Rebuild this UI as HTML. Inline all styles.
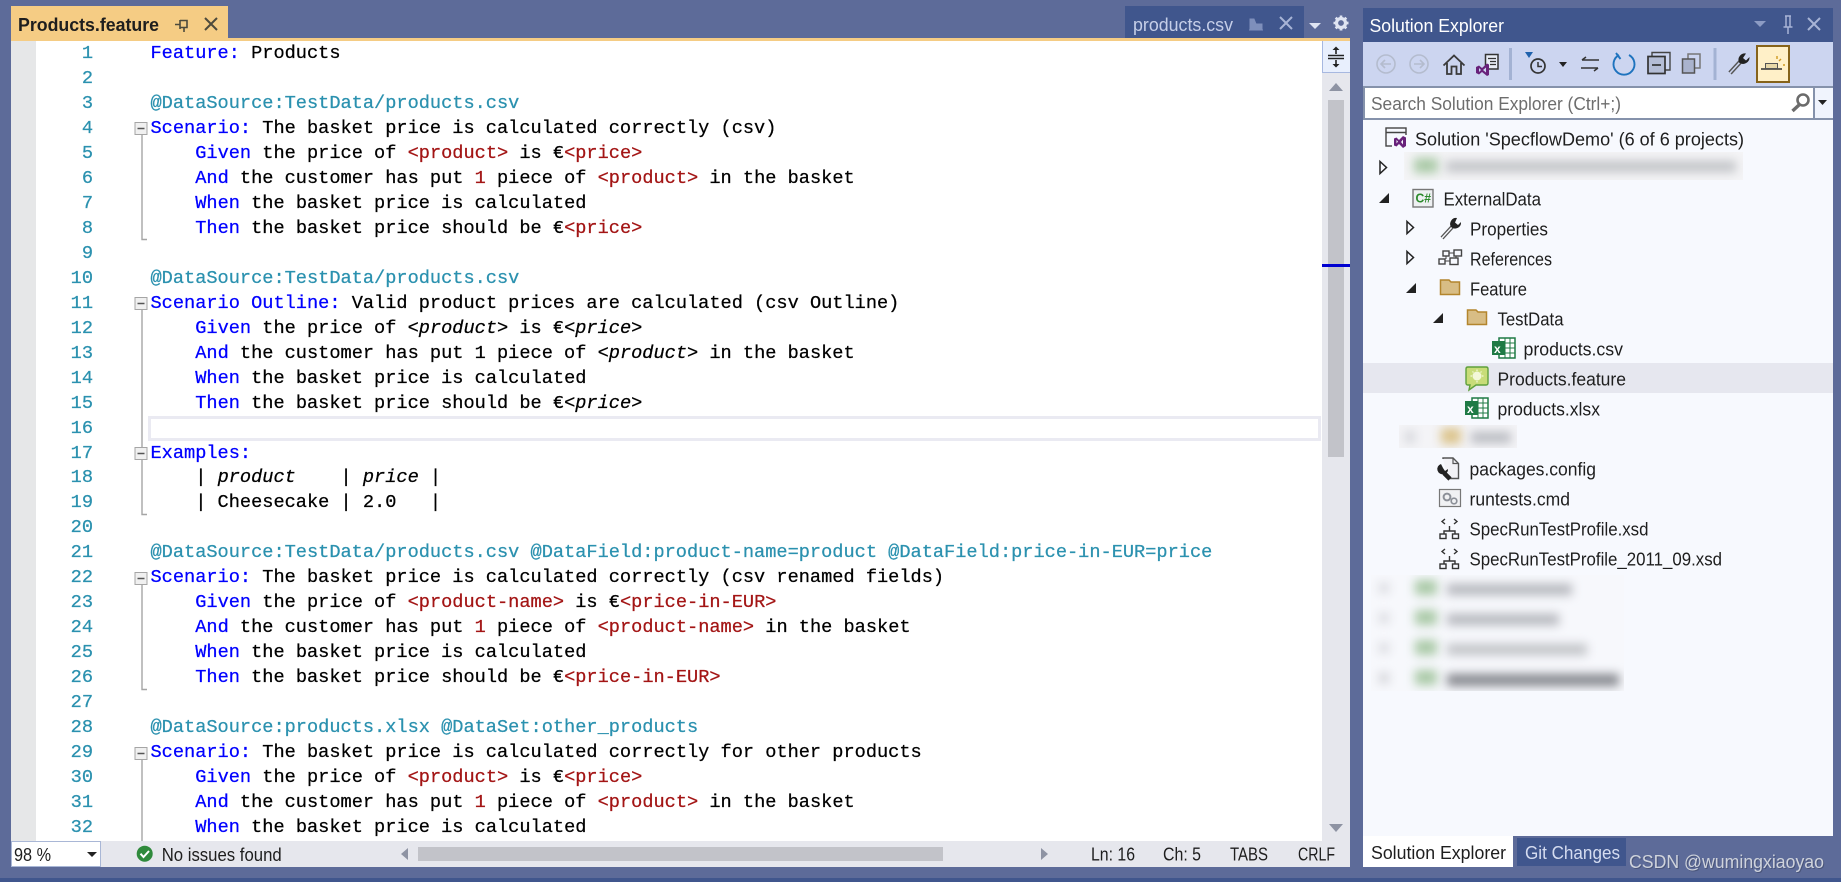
<!DOCTYPE html>
<html lang="en">
<head>
<meta charset="utf-8">
<title>Products.feature</title>
<style>
html,body{margin:0;padding:0;width:1841px;height:882px;overflow:hidden;background:#5d6b99;}
.r{position:absolute;}
#code,#nums{position:absolute;top:0;margin:0;font:18.64px/24.97px "Liberation Mono",monospace;white-space:pre;color:#000;-webkit-text-stroke:.25px currentColor;}
#code{left:139.5px;}
#nums{left:0;width:82px;text-align:right;color:#2b91af;}
.k{color:#0000ff}.t{color:#2b91af}.v{color:#a31515}.i{font-style:italic}
svg{position:absolute;left:0;top:0;}
text{font-family:"Liberation Sans",sans-serif;font-size:18.5px;fill:#1e1e1e;}
.blur{position:absolute;filter:blur(5px);}
</style>
</head>
<body>
<div class="r" style="left:0;top:878px;width:1841px;height:4px;background:#40568d"></div>
<div class="r" style="left:11px;top:6px;width:217px;height:32px;background:#f5cc84"></div>
<div class="r" style="left:1125px;top:6px;width:179px;height:32px;background:#40568d"></div>
<div class="r" style="left:11px;top:38px;width:1339px;height:3px;background:#f5cc84"></div>

<div class="r" style="left:11px;top:41px;width:1311px;height:800px;background:#fff;overflow:hidden">
  <div class="r" style="left:0;top:0;width:25px;height:800px;background:#e6e7e8"></div>
  <div class="r" style="left:137px;top:375px;width:1173px;height:25px;box-sizing:border-box;border:3px solid #eaeaf2"></div>
  <pre id="nums">1
2
3
4
5
6
7
8
9
10
11
12
13
14
15
16
17
18
19
20
21
22
23
24
25
26
27
28
29
30
31
32</pre>
<pre id="code"><span class="k">Feature:</span> Products

<span class="t">@DataSource:TestData/products.csv</span>
<span class="k">Scenario:</span> The basket price is calculated correctly (csv)
    <span class="k">Given</span> the price of <span class="v">&lt;product&gt;</span> is €<span class="v">&lt;price&gt;</span>
    <span class="k">And</span> the customer has put <span class="v">1</span> piece of <span class="v">&lt;product&gt;</span> in the basket
    <span class="k">When</span> the basket price is calculated
    <span class="k">Then</span> the basket price should be €<span class="v">&lt;price&gt;</span>

<span class="t">@DataSource:TestData/products.csv</span>
<span class="k">Scenario Outline:</span> Valid product prices are calculated (csv Outline)
    <span class="k">Given</span> the price of <span class="i">&lt;product&gt;</span> is €<span class="i">&lt;price&gt;</span>
    <span class="k">And</span> the customer has put 1 piece of <span class="i">&lt;product&gt;</span> in the basket
    <span class="k">When</span> the basket price is calculated
    <span class="k">Then</span> the basket price should be €<span class="i">&lt;price&gt;</span>

<span class="k">Examples:</span>
    | <span class="i">product</span>    | <span class="i">price</span> |
    | Cheesecake | 2.0   |

<span class="t">@DataSource:TestData/products.csv @DataField:product-name=product @DataField:price-in-EUR=price</span>
<span class="k">Scenario:</span> The basket price is calculated correctly (csv renamed fields)
    <span class="k">Given</span> the price of <span class="v">&lt;product-name&gt;</span> is €<span class="v">&lt;price-in-EUR&gt;</span>
    <span class="k">And</span> the customer has put <span class="v">1</span> piece of <span class="v">&lt;product-name&gt;</span> in the basket
    <span class="k">When</span> the basket price is calculated
    <span class="k">Then</span> the basket price should be €<span class="v">&lt;price-in-EUR&gt;</span>

<span class="t">@DataSource:products.xlsx @DataSet:other_products</span>
<span class="k">Scenario:</span> The basket price is calculated correctly for other products
    <span class="k">Given</span> the price of <span class="v">&lt;product&gt;</span> is €<span class="v">&lt;price&gt;</span>
    <span class="k">And</span> the customer has put <span class="v">1</span> piece of <span class="v">&lt;product&gt;</span> in the basket
    <span class="k">When</span> the basket price is calculated</pre>
</div>

<!-- editor scrollbar -->
<div class="r" style="left:1322px;top:41px;width:28px;height:800px;background:#e6e7ed"></div>
<div class="r" style="left:1322px;top:41px;width:28px;height:32px;box-sizing:border-box;background:#e8effd;border-left:1px solid #a7b8e0;border-bottom:1px solid #a7b8e0"></div>
<div class="r" style="left:1328px;top:100px;width:16px;height:357px;background:#c2c3c9"></div>
<div class="r" style="left:1322px;top:264px;width:28px;height:3px;background:#0000d0"></div>

<!-- status bar -->
<div class="r" style="left:11px;top:841px;width:1339px;height:26px;background:#e6e7ed"></div>
<div class="r" style="left:11px;top:841px;width:90px;height:26px;box-sizing:border-box;background:#fff;border:1px solid #a9b7d6"></div>
<div class="r" style="left:418px;top:847px;width:525px;height:14px;background:#c2c3c9"></div>

<!-- solution explorer -->
<div class="r" style="left:1363px;top:8px;width:470px;height:34px;background:#40568d"></div>
<div class="r" style="left:1363px;top:42px;width:470px;height:44px;background:#ccd5f0"></div>
<div class="r" style="left:1363px;top:86px;width:470px;height:34px;background:#8592ab"></div>
<div class="r" style="left:1365px;top:88px;width:448px;height:30px;background:#fff"></div>
<div class="r" style="left:1815px;top:88px;width:18px;height:30px;background:#f0f4fd"></div>
<div class="r" style="left:1363px;top:120px;width:470px;height:716px;background:#f7f9fe"></div>
<div class="r" style="left:1363px;top:363px;width:470px;height:30px;background:#e6e7ef"></div>
<div class="r" style="left:1363px;top:836px;width:150px;height:31px;background:#fff"></div>
<div class="r" style="left:1517px;top:838px;width:109px;height:28px;background:#40568d"></div>

<!-- blurred rows -->
<div class="r" style="left:1404px;top:152px;width:339px;height:28px;background:#f4f4f6;overflow:hidden">
  <div class="blur" style="left:10px;top:6px;width:24px;height:15px;background:#a9c9a6"></div>
  <div class="blur" style="left:42px;top:9px;width:290px;height:11px;background:#c0c2c6"></div>
</div>
<div class="r" style="left:1399px;top:425px;width:118px;height:23px;background:#f4f4f7;overflow:hidden">
  <div class="blur" style="left:6px;top:6px;width:10px;height:12px;background:#d4d5da"></div>
  <div class="blur" style="left:42px;top:3px;width:20px;height:16px;background:#dcc48c"></div>
  <div class="blur" style="left:72px;top:7px;width:40px;height:11px;background:#b8bac0"></div>
</div>
<div class="r" style="left:1371px;top:575px;width:253px;height:116px;background:#f7f8fc;overflow:hidden">
  <div class="blur" style="left:8px;top:8px;width:10px;height:10px;background:#d8d9de"></div>
  <div class="blur" style="left:8px;top:38px;width:10px;height:10px;background:#d8d9de"></div>
  <div class="blur" style="left:8px;top:68px;width:10px;height:10px;background:#d8d9de"></div>
  <div class="blur" style="left:8px;top:98px;width:10px;height:10px;background:#d0d1d6"></div>
  <div class="blur" style="left:44px;top:5px;width:22px;height:15px;background:#a9c9a6"></div>
  <div class="blur" style="left:44px;top:35px;width:22px;height:15px;background:#a9c9a6"></div>
  <div class="blur" style="left:44px;top:65px;width:22px;height:15px;background:#a9c9a6"></div>
  <div class="blur" style="left:44px;top:95px;width:22px;height:15px;background:#a9c9a6"></div>
  <div class="blur" style="left:76px;top:9px;width:125px;height:11px;background:#b4b6bc"></div>
  <div class="blur" style="left:76px;top:39px;width:112px;height:11px;background:#b4b6bc"></div>
  <div class="blur" style="left:76px;top:69px;width:140px;height:11px;background:#c0c2c6"></div>
  <div class="blur" style="left:76px;top:99px;width:172px;height:12px;background:#84868c"></div>
</div>

<svg width="1841" height="882" viewBox="0 0 1841 882">
  <!-- top tab -->
  <text x="18" y="31" textLength="141" lengthAdjust="spacingAndGlyphs" style="font-weight:bold">Products.feature</text>
  <g stroke="#4d4a3c" fill="none" stroke-width="1.6">
    <path d="M175 24.5H180M180 20V29M180 20.5H187V27.5H180M184 27.5V32"/>
    <path d="M205 18L217 30M217 18L205 30" stroke-width="2"/>
  </g>
  <!-- products.csv tab -->
  <text x="1133" y="31" textLength="100" lengthAdjust="spacingAndGlyphs" style="fill:#c5cee8">products.csv</text>
  <path d="M1250 19L1254 19L1256 24H1262V29H1250Z M1249 30H1263" fill="#7e8fbb" stroke="#7e8fbb"/>
  <path d="M1280 17L1292 29M1292 17L1280 29" stroke="#a8b4d6" stroke-width="2" fill="none"/>
  <path d="M1309 23H1321L1315 29Z" fill="#dfe4f2"/>
  <circle cx="1341" cy="23" r="4.5" fill="none" stroke="#dfe4f2" stroke-width="3.2"/>
  <path d="M1341 15.5V30.5M1333.5 23H1348.5M1335.7 17.7L1346.3 28.3M1346.3 17.7L1335.7 28.3" stroke="#dfe4f2" stroke-width="2.6" stroke-dasharray="2.6 10"/>
  <path d="M1341 30.5V28M1348.5 23H1346M1346.3 28.3L1344.5 26.5M1335.7 28.3L1337.5 26.5" stroke="#dfe4f2" stroke-width="2.6"/>

  <!-- editor outlining -->
  <g fill="none" stroke="#a5a5a5" stroke-width="1.4">
    <path d="M142 135V239.5H147"/>
    <path d="M142 310V448"/>
    <path d="M142 460V514.5H147"/>
    <path d="M142 585V689.5H147"/>
    <path d="M142 760V841"/>
  </g>
  <g fill="#f0f0f0" stroke="#a5a5a5" stroke-width="1">
    <rect x="135" y="122.5" width="12" height="12"/>
    <rect x="135" y="297.5" width="12" height="12"/>
    <rect x="135" y="447.5" width="12" height="12"/>
    <rect x="135" y="572.5" width="12" height="12"/>
    <rect x="135" y="747.5" width="12" height="12"/>
  </g>
  <g stroke="#555" stroke-width="1.4">
    <path d="M137.5 128.5h7M137.5 303.5h7M137.5 453.5h7M137.5 578.5h7M137.5 753.5h7"/>
  </g>

  <!-- scrollbar glyphs -->
  <path d="M1329 91L1336 83L1343 91Z" fill="#8e93a3"/>
  <path d="M1329 824L1336 832L1343 824Z" fill="#8e93a3"/>
  <g stroke="#222" stroke-width="1.6" fill="none">
    <path d="M1328 55.5H1344M1328 58.5H1344"/>
    <path d="M1336 54V48M1336 60V66"/>
  </g>
  <path d="M1332.5 50L1336 46.5L1339.5 50ZM1332.5 64L1336 67.5L1339.5 64Z" fill="#222"/>

  <!-- status bar -->
  <text x="14" y="861" textLength="37" lengthAdjust="spacingAndGlyphs">98 %</text>
  <path d="M87 852H97L92 857Z" fill="#222"/>
  <circle cx="144.7" cy="853.7" r="8" fill="#2f8a3c"/>
  <path d="M140.5 853.7L143.5 857L149 851" stroke="#fff" stroke-width="2" fill="none"/>
  <text x="161.7" y="861" textLength="120" lengthAdjust="spacingAndGlyphs">No issues found</text>
  <path d="M408 848V860L401 854Z M1041 848V860L1048 854Z" fill="#8e93a3"/>
  <text x="1091" y="860.5" textLength="44" lengthAdjust="spacingAndGlyphs">Ln: 16</text>
  <text x="1163" y="860.5" textLength="38" lengthAdjust="spacingAndGlyphs">Ch: 5</text>
  <text x="1230" y="860.5" textLength="38" lengthAdjust="spacingAndGlyphs">TABS</text>
  <text x="1298" y="860.5" textLength="37" lengthAdjust="spacingAndGlyphs">CRLF</text>

  <!-- SE title -->
  <text x="1369.5" y="32" textLength="134.5" lengthAdjust="spacingAndGlyphs" style="fill:#fff">Solution Explorer</text>
  <path d="M1754 21H1766L1760 27Z" fill="#8c9bc4"/>
  <path d="M1785 16H1791M1786 16V27H1790V16M1783.5 27H1792.5M1788 27V34" stroke="#a8b4d6" stroke-width="1.5" fill="none"/>
  <path d="M1808 18L1820 30M1820 18L1808 30" stroke="#a8b4d6" stroke-width="2" fill="none"/>

  <!-- toolbar -->
  <g fill="none" stroke="#b4bcce" stroke-width="1.6">
    <circle cx="1386" cy="64" r="9"/><path d="M1391 64H1381M1385 60L1381 64L1385 68"/>
    <circle cx="1419" cy="64" r="9"/><path d="M1414 64H1424M1420 60L1424 64L1420 68"/>
  </g>
  <path d="M1443.5 65.5L1454 55.5L1464.5 65.5M1447 63V74H1451.5V66.5H1456.5V74H1461V63" fill="none" stroke="#3a3a3a" stroke-width="1.8"/>
  <rect x="1485.5" y="54.5" width="12.5" height="14.5" fill="#e8ecf6" stroke="#333" stroke-width="1.5"/>
  <path d="M1488 58.5H1496M1490 61.5H1496M1490 64.5H1496" stroke="#333" stroke-width="1.2"/>
  <path d="M1476 67L1479 65.5L1482 68L1487 63.5L1489 64.5V75L1487 76L1482 72L1479 74.5L1476 73Z" fill="#68217a"/>
  <path d="M1479 68L1481 70L1479 72ZM1486 67.5V72.5L1483 70Z" fill="#ccd5f0"/>
  <rect x="1509" y="48" width="3" height="32" fill="#a3b2d3"/>
  <path d="M1525 52H1533L1529 58Z" fill="#1f62ad"/>
  <circle cx="1538" cy="66" r="7" fill="none" stroke="#333" stroke-width="1.7"/>
  <path d="M1538 62V66.5H1542" fill="none" stroke="#333" stroke-width="1.5"/>
  <path d="M1559 62H1567L1563 67Z" fill="#222"/>
  <path d="M1582 60H1599M1582 60L1586 57M1598 68H1581M1598 68L1594 71" fill="none" stroke="#333" stroke-width="1.5"/>
  <path d="M1619 55A10.5 10.5 0 1 0 1629 55" fill="none" stroke="#1e73be" stroke-width="1.9"/>
  <path d="M1616 53L1620.5 59" stroke="#1e73be" stroke-width="1.9"/>
  <path d="M1652 56V52.5H1670V70H1665.5" fill="none" stroke="#444" stroke-width="1.4"/>
  <rect x="1648" y="56.5" width="17" height="17" fill="#b4bdd6" stroke="#333" stroke-width="1.7"/>
  <path d="M1652 65H1661" stroke="#333" stroke-width="1.7"/>
  <rect x="1688" y="54" width="12" height="14" fill="none" stroke="#777" stroke-width="1.5"/>
  <rect x="1682.5" y="59" width="12" height="14" fill="#aab3cd" stroke="#555" stroke-width="1.5"/>
  <rect x="1713.5" y="48" width="3" height="32" fill="#a3b2d3"/>
  <path d="M1730 73L1741 61" stroke="#555" stroke-width="4.5"/>
  <path d="M1730 73L1741 61" stroke="#ccd5f0" stroke-width="1.6"/>
  <path d="M1746 53.5A6.5 6.5 0 0 0 1739 62.5A6.5 6.5 0 0 0 1749.5 57L1746 60.5L1743 58Z" fill="#222"/>
  <rect x="1757" y="46" width="32" height="36" fill="#fff0c8" stroke="#86631a" stroke-width="2"/>
  <path d="M1761 69H1782" stroke="#333" stroke-width="1.4"/>
  <rect x="1765.5" y="63.5" width="12" height="5" fill="#e8d8a8" stroke="#555"/>
  <path d="M1777 56V59M1781 59L1779 61M1783 65H1785" stroke="#d09a20" stroke-width="1.4"/>

  <!-- search -->
  <text x="1371" y="110" textLength="250" lengthAdjust="spacingAndGlyphs" style="fill:#6d6d6d">Search Solution Explorer (Ctrl+;)</text>
  <circle cx="1803" cy="100" r="5.5" fill="none" stroke="#6b6b6b" stroke-width="2.6"/>
  <path d="M1799 105L1792.5 111" stroke="#6b6b6b" stroke-width="3.4"/>
  <path d="M1818 100H1827L1822.5 105Z" fill="#222"/>

  <!-- tree arrows -->
  <g fill="none" stroke="#222" stroke-width="1.5">
    <path d="M1380 161.5L1386.5 167.5L1380 173.5Z"/>
    <path d="M1407 221.5L1413.5 227.5L1407 233.5Z"/>
    <path d="M1407 251.5L1413.5 257.5L1407 263.5Z"/>
  </g>
  <g fill="#222">
    <path d="M1389 193V203H1379Z"/>
    <path d="M1416 283V293H1406Z"/>
    <path d="M1443 313V323H1433Z"/>
  </g>

  <!-- tree icons -->
  <!-- solution -->
  <rect x="1386" y="128" width="20" height="18" fill="#f7f9fe" stroke="#444" stroke-width="1.4"/>
  <path d="M1386 132.5H1406" stroke="#444" stroke-width="1.4"/>
  <rect x="1392" y="135" width="16" height="14" fill="#f7f9fe"/>
  <path d="M1394 138.5L1396.5 137.5L1399 140L1403 136L1406 137.5V146L1403 148L1399 144L1396.5 146.5L1394 145.5Z" fill="#68217a"/>
  <path d="M1396.5 140L1398 141.5L1396.5 143.5ZM1403 139.5V144.5L1401 142Z" fill="#f7f9fe"/>
  <!-- C# -->
  <rect x="1413" y="189.5" width="20" height="17.5" fill="#eef0f2" stroke="#777" stroke-width="1.4"/>
  <text x="1415.5" y="202.5" textLength="15.5" lengthAdjust="spacingAndGlyphs" style="font-size:13px;font-weight:bold;fill:#2c8a2c">C#</text>
  <!-- wrench -->
  <path d="M1442 238L1453 226" stroke="#555" stroke-width="4"/>
  <path d="M1442 238L1453 226" stroke="#f7f9fe" stroke-width="1.4"/>
  <path d="M1457 218A6 6 0 0 0 1451 227A6 6 0 0 0 1461 222L1458 225L1455 222.5Z" fill="#222"/>
  <!-- references -->
  <g fill="#f7f9fe" stroke="#444" stroke-width="1.4">
    <rect x="1443" y="251" width="6" height="5"/>
    <rect x="1454" y="250" width="7.5" height="6"/>
    <rect x="1439" y="259" width="6" height="5"/>
    <rect x="1450" y="258" width="8" height="6.5"/>
  </g>
  <path d="M1449 253H1454M1445 261H1450M1446 256V259M1456 256V258" stroke="#444" fill="none"/>
  <!-- folders -->
  <path d="M1440.5 294.5V280H1449L1451 282H1459.5V294.5Z" fill="#d8bd85" stroke="#b3852d" stroke-width="1.5"/>
  <path d="M1467.5 324.5V310H1476L1478 312H1486.5V324.5Z" fill="#d8bd85" stroke="#b3852d" stroke-width="1.5"/>
  <!-- excel csv -->
  <g>
    <rect x="1499" y="338" width="16" height="20" fill="#fff" stroke="#1f7a45" stroke-width="1.5"/>
    <path d="M1505 338V358M1510 338V358M1499 343H1515M1499 348H1515M1499 353H1515" stroke="#1f7a45" stroke-width="1"/>
    <rect x="1492" y="341" width="13" height="14" fill="#1f7a45"/>
    <text x="1494" y="353" style="font-size:12px;font-weight:bold;fill:#fff">x</text>
  </g>
  <!-- excel xlsx -->
  <g>
    <rect x="1472" y="398" width="16" height="20" fill="#fff" stroke="#1f7a45" stroke-width="1.5"/>
    <path d="M1478 398V418M1483 398V418M1472 403H1488M1472 408H1488M1472 413H1488" stroke="#1f7a45" stroke-width="1"/>
    <rect x="1465" y="401" width="13" height="14" fill="#1f7a45"/>
    <text x="1467" y="413" style="font-size:12px;font-weight:bold;fill:#fff">x</text>
  </g>
  <!-- feature -->
  <path d="M1468 367H1486Q1488 367 1488 369V383Q1488 385 1486 385H1476L1469 390L1470 385H1468Q1466 385 1466 383V369Q1466 367 1468 367Z" fill="#c8dc78" stroke="#5fa03c" stroke-width="1.4"/>
  <circle cx="1477" cy="376" r="4.5" fill="#f3f8d8"/>
  <path d="M1477 369.5V371M1477 381V382.5M1470.5 376H1472M1482 376H1483.5M1472.5 371.5L1473.5 372.5M1481.5 371.5L1480.5 372.5" stroke="#f3f8d8" stroke-width="1.2"/>
  <!-- packages.config -->
  <path d="M1443 459V458H1453L1458.5 463.5V478.5H1448" fill="#f2f2f6" stroke="#555" stroke-width="1.4"/>
  <path d="M1453 458V463.5H1458.5" fill="none" stroke="#555" stroke-width="1.2"/>
  <path d="M1450 479L1444 473" stroke="#222" stroke-width="4.5"/>
  <path d="M1441 464A4.5 4.5 0 0 0 1444 474A4.5 4.5 0 0 0 1448 469L1445 471L1443 468Z" fill="#222"/>
  <!-- runtests -->
  <rect x="1439.5" y="489.5" width="21" height="17" fill="#f0f1f3" stroke="#777" stroke-width="1.2"/>
  <circle cx="1447" cy="497" r="3.4" fill="none" stroke="#8c9098" stroke-width="2"/>
  <circle cx="1454" cy="501" r="2.8" fill="none" stroke="#8c9098" stroke-width="1.7"/>
  <!-- xsd -->
  <g fill="none" stroke="#333" stroke-width="1.4">
    <path d="M1445 519L1442 521.5L1445 524M1454 519L1457 521.5L1454 524"/>
    <path d="M1449.5 526V531M1444 534V531H1455V534"/>
    <rect x="1440" y="534" width="6" height="4.5"/>
    <rect x="1452.5" y="534" width="6" height="4.5"/>
    <path d="M1445 549L1442 551.5L1445 554M1454 549L1457 551.5L1454 554"/>
    <path d="M1449.5 556V561M1444 564V561H1455V564"/>
    <rect x="1440" y="564" width="6" height="4.5"/>
    <rect x="1452.5" y="564" width="6" height="4.5"/>
  </g>

  <!-- tree labels -->
  <text x="1415" y="145.5" textLength="329" lengthAdjust="spacingAndGlyphs">Solution 'SpecflowDemo' (6 of 6 projects)</text>
  <text x="1443.5" y="205.5" textLength="97.5" lengthAdjust="spacingAndGlyphs">ExternalData</text>
  <text x="1470" y="235.5" textLength="78" lengthAdjust="spacingAndGlyphs">Properties</text>
  <text x="1470" y="265.5" textLength="82" lengthAdjust="spacingAndGlyphs">References</text>
  <text x="1470" y="295.5" textLength="57" lengthAdjust="spacingAndGlyphs">Feature</text>
  <text x="1497.5" y="325.5" textLength="66" lengthAdjust="spacingAndGlyphs">TestData</text>
  <text x="1523.5" y="355.5" textLength="99.5" lengthAdjust="spacingAndGlyphs">products.csv</text>
  <text x="1497.5" y="385.5" textLength="128.5" lengthAdjust="spacingAndGlyphs">Products.feature</text>
  <text x="1497.5" y="415.5" textLength="102.5" lengthAdjust="spacingAndGlyphs">products.xlsx</text>
  <text x="1469.5" y="475.5" textLength="126.5" lengthAdjust="spacingAndGlyphs">packages.config</text>
  <text x="1469.5" y="505.5" textLength="100.5" lengthAdjust="spacingAndGlyphs">runtests.cmd</text>
  <text x="1469.5" y="535.5" textLength="179" lengthAdjust="spacingAndGlyphs">SpecRunTestProfile.xsd</text>
  <text x="1469.5" y="565.5" textLength="252.5" lengthAdjust="spacingAndGlyphs">SpecRunTestProfile_2011_09.xsd</text>

  <!-- bottom tabs -->
  <text x="1371" y="859" textLength="135" lengthAdjust="spacingAndGlyphs">Solution Explorer</text>
  <text x="1525" y="859" textLength="95" lengthAdjust="spacingAndGlyphs" style="fill:#d5dcf0">Git Changes</text>
  <text x="1630" y="869" textLength="195" lengthAdjust="spacingAndGlyphs" style="fill:#3a4260;opacity:.55">CSDN @wumingxiaoyao</text>
  <text x="1629" y="868" textLength="195" lengthAdjust="spacingAndGlyphs" style="fill:#cfd3dc">CSDN @wumingxiaoyao</text>
</svg>
</body>
</html>
